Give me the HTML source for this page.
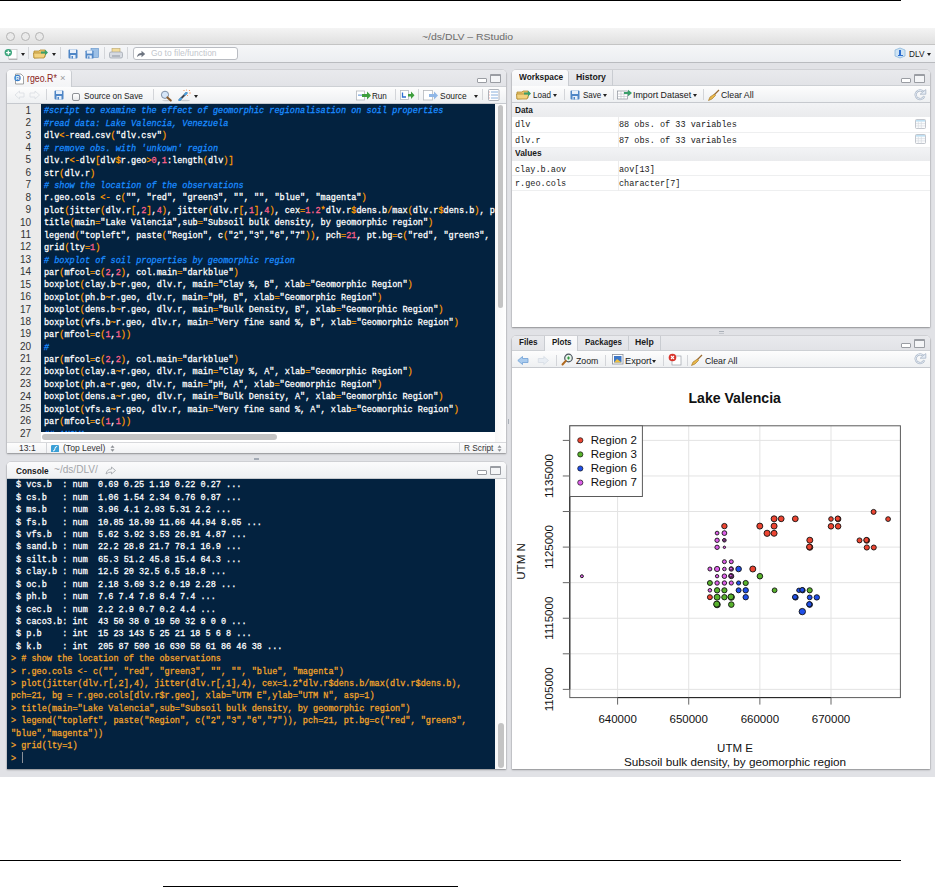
<!DOCTYPE html><html><head><meta charset="utf-8"><style>html,body{margin:0;padding:0;background:#fff;width:936px;height:887px;overflow:hidden;position:relative}i{font-style:italic}</style></head><body><div style="position:absolute;left:0px;top:0px;width:901px;height:1px;background:#000"></div>
<div style="position:absolute;left:0px;top:28px;width:935px;height:749px;background:#e1e2e6"></div>
<div style="position:absolute;left:0px;top:28px;width:935px;height:17px;background:linear-gradient(#f4f4f4,#e0e0e0);border-bottom:1px solid #c4c4c4;box-sizing:border-box"></div>
<div style="position:absolute;left:6.0px;top:31.7px;width:9px;height:9px;border-radius:50%;box-sizing:border-box;border:1px solid #b4b4b4;background:#eaeaea"></div>
<div style="position:absolute;left:20.5px;top:31.7px;width:9px;height:9px;border-radius:50%;box-sizing:border-box;border:1px solid #b4b4b4;background:#eaeaea"></div>
<div style="position:absolute;left:35.0px;top:31.7px;width:9px;height:9px;border-radius:50%;box-sizing:border-box;border:1px solid #b4b4b4;background:#eaeaea"></div>
<div style="position:absolute;left:422.4px;top:32.73px;white-space:pre;font-family:'Liberation Sans',sans-serif;font-size:9.3px;line-height:9.3px;color:#6a6a6a;transform:scaleX(1.1225);transform-origin:0 0;">~/ds/DLV – RStudio</div>
<div style="position:absolute;left:0px;top:45px;width:935px;height:18px;background:linear-gradient(#f5f6f8,#eceef1);border-bottom:1px solid #b9bbbf;box-sizing:border-box"></div>
<svg style="position:absolute;left:4px;top:48px" width="14" height="12"><rect x="4.5" y="1.5" width="8.5" height="9.5" fill="#fff" stroke="#c9c9c9" stroke-width="0.8"/><path d="M5 11.3 L13.3 11.3" stroke="#9a9a9a" stroke-width="0.8"/><circle cx="4.3" cy="4.6" r="3.7" fill="#3ba57c"/><path d="M4.3 2.4 L4.3 6.8 M2.1 4.6 L6.5 4.6" stroke="#fff" stroke-width="1.3"/></svg>
<div style="position:absolute;left:21px;top:52.5px;width:0;height:0;border-left:2.5px solid transparent;border-right:2.5px solid transparent;border-top:3px solid #222"></div>
<div style="position:absolute;left:27.5px;top:47px;width:1px;height:12px;background:#d3d5d9"></div>
<svg style="position:absolute;left:33px;top:48px" width="16" height="11"><path d="M1 3 L6 3 L7 2 L12 2 L12 9 L1 10 Z" fill="#e8c36a" stroke="#b08a30" stroke-width="0.8"/><path d="M0.5 5 L13 5 L11 10 L1 10 Z" fill="#f2d27e" stroke="#b08a30" stroke-width="0.8"/><path d="M8 3.5 L12 3.5 L12 1.5 L15 4.5 L12 7.5 L12 5.5 L8 5.5Z" fill="#3a9f6a"/></svg>
<div style="position:absolute;left:52px;top:52.5px;width:0;height:0;border-left:2.5px solid transparent;border-right:2.5px solid transparent;border-top:3px solid #222"></div>
<div style="position:absolute;left:59.5px;top:47px;width:1px;height:12px;background:#d3d5d9"></div>
<svg style="position:absolute;left:68px;top:49px" width="10" height="10" viewBox="0 0 10 10"><rect x="0.5" y="0.5" width="9" height="9" rx="1" fill="#4f86c6"/><rect x="2" y="0.5" width="6" height="3.5" fill="#e8f0fa"/><rect x="2.5" y="6" width="5" height="3.5" fill="#e8f0fa"/><rect x="3.5" y="7" width="1.5" height="2.5" fill="#4f86c6"/></svg>
<svg style="position:absolute;left:85px;top:48px" width="14" height="11"><rect x="6" y="0.5" width="7.5" height="9" fill="#9cc0e6" stroke="#5c8fc8" stroke-width="0.6"/></svg>
<svg style="position:absolute;left:85px;top:50px" width="9" height="9" viewBox="0 0 10 10"><rect x="0.5" y="0.5" width="9" height="9" rx="1" fill="#4f86c6"/><rect x="2" y="0.5" width="6" height="3.5" fill="#e8f0fa"/><rect x="2.5" y="6" width="5" height="3.5" fill="#e8f0fa"/><rect x="3.5" y="7" width="1.5" height="2.5" fill="#4f86c6"/></svg>
<div style="position:absolute;left:103.5px;top:47px;width:1px;height:12px;background:#d3d5d9"></div>
<svg style="position:absolute;left:109px;top:48px" width="14" height="11"><rect x="3" y="0.5" width="8" height="5" fill="#f3dc9b" stroke="#b9a46a" stroke-width="0.6"/><rect x="0.5" y="4" width="13" height="6" rx="1.5" fill="#d7dbe2" stroke="#9aa0aa" stroke-width="0.7"/><rect x="3" y="7.5" width="8" height="1" fill="#8c939e"/></svg>
<div style="position:absolute;left:127px;top:47px;width:1px;height:12px;background:#d3d5d9"></div>
<div style="position:absolute;left:132.5px;top:47px;width:105px;height:12.5px;background:#fff;border:1px solid #b9bcc2;border-radius:3px;box-sizing:border-box"></div>
<svg style="position:absolute;left:136px;top:50px" width="10" height="8"><path d="M1 7 Q1.5 3 5.5 3 L5.5 0.8 L9.2 4 L5.5 7.2 L5.5 5 Q3 5 1 7Z" fill="#6d7480"/></svg>
<div style="position:absolute;left:151px;top:48.88px;white-space:pre;font-family:'Liberation Sans',sans-serif;font-size:9px;line-height:9px;color:#c2c6cc;transform:scaleX(0.9352);transform-origin:0 0;">Go to file/function</div>
<svg style="position:absolute;left:894px;top:47px" width="12" height="12"><path d="M1 3 L6 1 L11 3 L11 9 L6 11 L1 9Z" fill="#cfe3f3" stroke="#8cb8dc" stroke-width="0.8"/><path d="M5 3 L7 3 L7 8 L9 8 L9 9 L4 9 L4 8 L5 8Z" fill="#2e6fd0"/></svg>
<div style="position:absolute;left:908.8px;top:48.94px;white-space:pre;font-family:'Liberation Sans',sans-serif;font-size:9.4px;line-height:9.4px;color:#1a1a1a;transform:scaleX(0.8756);transform-origin:0 0;">DLV</div>
<div style="position:absolute;left:927px;top:53px;width:0;height:0;border-left:2.5px solid transparent;border-right:2.5px solid transparent;border-top:3px solid #222"></div>
<div style="position:absolute;left:7px;top:70px;width:499px;height:383px;background:#fff;border-radius:4px 4px 0 0;box-shadow:0 1px 2px rgba(0,0,0,0.32), 0 0 0 0.5px rgba(0,0,0,0.12)"></div>
<div style="position:absolute;left:7px;top:70px;width:499px;height:17px;background:linear-gradient(#e9eaed,#e2e3e7);border-radius:4px 4px 0 0;border-bottom:1px solid #cdd0d4;box-sizing:border-box"></div>
<div style="position:absolute;left:7px;top:70px;width:64.5px;height:16.5px;background:linear-gradient(#fbfbfc,#f3f4f6);border-right:1px solid #c9ccd1;border-radius:4px 3px 0 0;box-sizing:border-box"></div>
<svg style="position:absolute;left:13px;top:73px" width="12" height="12"><path d="M2.5 1 L8 1 L10.5 3.5 L10.5 11 L2.5 11Z" fill="#fff" stroke="#8c8c8c" stroke-width="0.8"/><circle cx="4.5" cy="5" r="3.2" fill="#3c7fc8"/><text x="4.5" y="7" font-size="5" fill="#fff" text-anchor="middle" font-family="Liberation Sans" font-weight="bold">R</text></svg>
<div style="position:absolute;left:27.4px;top:73.73px;white-space:pre;font-family:'Liberation Sans',sans-serif;font-size:10px;line-height:10px;color:#8c1d1a;transform:scaleX(0.8789);transform-origin:0 0;">rgeo.R*</div>
<div style="position:absolute;left:59.5px;top:74.38px;white-space:pre;font-family:'Liberation Sans',sans-serif;font-size:9px;line-height:9px;color:#9a9a9a;transform:scaleX(1.0464);transform-origin:0 0;">×</div>
<div style="position:absolute;left:477px;top:78px;width:10px;height:4.5px;border:1px solid #9a9da3;border-top-width:1.5px;border-radius:1px;background:#fff;box-sizing:border-box"></div>
<div style="position:absolute;left:490px;top:74px;width:10.5px;height:8.5px;border:1px solid #9a9da3;border-top-width:2px;border-radius:1px;background:#f4f5f7;box-sizing:border-box"></div>
<div style="position:absolute;left:7px;top:87px;width:499px;height:16.5px;background:linear-gradient(#fdfdfd,#eef0f2);border-bottom:1px solid #c6c9ce;box-sizing:border-box"></div>
<svg style="position:absolute;left:14px;top:90px" width="28" height="10"><path d="M1 5 L5.5 1 L5.5 3 L10 3 L10 7 L5.5 7 L5.5 9Z" fill="none" stroke="#dde0e4" stroke-width="0.9"/><path d="M25.5 5 L21 1 L21 3 L16 3 L16 7 L21 7 L21 9Z" fill="none" stroke="#dde0e4" stroke-width="0.9"/></svg>
<div style="position:absolute;left:46px;top:89px;width:1px;height:11px;background:#d3d5d9"></div>
<svg style="position:absolute;left:53.5px;top:90px" width="10" height="10" viewBox="0 0 10 10"><rect x="0.5" y="0.5" width="9" height="9" rx="1" fill="#4f86c6"/><rect x="2" y="0.5" width="6" height="3.5" fill="#e8f0fa"/><rect x="2.5" y="6" width="5" height="3.5" fill="#e8f0fa"/><rect x="3.5" y="7" width="1.5" height="2.5" fill="#4f86c6"/></svg>
<div style="position:absolute;left:71.5px;top:92.5px;width:8px;height:8px;border:1px solid #8e9196;border-radius:2px;background:linear-gradient(#fff,#e9eaec);box-sizing:border-box"></div>
<div style="position:absolute;left:83.5px;top:90.87px;white-space:pre;font-family:'Liberation Sans',sans-serif;font-size:9.6px;line-height:9.6px;color:#1a1a1a;transform:scaleX(0.8637);transform-origin:0 0;">Source on Save</div>
<div style="position:absolute;left:152.5px;top:89px;width:1px;height:11px;background:#d3d5d9"></div>
<svg style="position:absolute;left:159.5px;top:89.5px" width="13" height="13"><ellipse cx="7" cy="10.6" rx="5" ry="0.7" fill="#c9ccd2"/><circle cx="5" cy="4.8" r="3.6" fill="#d6e6f8" stroke="#7d8fa6" stroke-width="1"/><path d="M7.4 7.4 L10.8 10.6" stroke="#8a5a2a" stroke-width="2" stroke-linecap="round"/></svg>
<svg style="position:absolute;left:178px;top:88.5px" width="14" height="13"><ellipse cx="7" cy="11.5" rx="5" ry="0.7" fill="#c9ccd2"/><path d="M1.5 11 L8.5 4" stroke="#3e4450" stroke-width="2" stroke-linecap="round"/><path d="M1.5 11 L3 9.5 M7 5.5 L8.5 4" stroke="#4aa0e0" stroke-width="2" stroke-linecap="round"/><circle cx="6" cy="1.5" r="0.6" fill="#f08a50"/><circle cx="11.5" cy="1.5" r="0.6" fill="#f08a50"/><circle cx="12" cy="4" r="0.7" fill="#f08a50"/><circle cx="9.5" cy="6.5" r="0.6" fill="#f08a50"/><circle cx="8.5" cy="1" r="0.5" fill="#f08a50"/></svg>
<div style="position:absolute;left:194px;top:95px;width:0;height:0;border-left:2.5px solid transparent;border-right:2.5px solid transparent;border-top:3px solid #222"></div>
<svg style="position:absolute;left:356px;top:90px" width="16" height="11"><rect x="0.5" y="1" width="8" height="9" fill="#fff" stroke="#b5b8bd" stroke-width="0.8"/><rect x="2" y="4.5" width="4.5" height="1.3" fill="#7aa6dc"/><path d="M6 4 L11 4 L11 1.5 L15 5.5 L11 9.5 L11 7 L6 7Z" fill="#3d9e3d"/></svg>
<div style="position:absolute;left:372.4px;top:91.04px;white-space:pre;font-family:'Liberation Sans',sans-serif;font-size:9.4px;line-height:9.4px;color:#1a1a1a;transform:scaleX(0.8640);transform-origin:0 0;">Run</div>
<div style="position:absolute;left:394.5px;top:89px;width:1px;height:11px;background:#d3d5d9"></div>
<svg style="position:absolute;left:400px;top:90px" width="15" height="11"><rect x="0.5" y="0.5" width="8" height="9" fill="#fff" stroke="#b5b8bd" stroke-width="0.8"/><path d="M2.5 2.5 L2.5 7 L6 7" fill="none" stroke="#2e6fd0" stroke-width="1.3"/><path d="M8 4 L11 4 L11 1.5 L14.5 5.2 L11 9 L11 6.5 L8 6.5Z" fill="#3d9e3d"/></svg>
<div style="position:absolute;left:418px;top:89px;width:1px;height:11px;background:#d3d5d9"></div>
<svg style="position:absolute;left:423px;top:90px" width="16" height="11"><rect x="0.5" y="0.5" width="9" height="9.5" fill="#fff" stroke="#b5b8bd" stroke-width="0.8"/><path d="M6 4 L11 4 L11 1.5 L15 5.5 L11 9.5 L11 7 L6 7Z" fill="#8fb6e6"/></svg>
<div style="position:absolute;left:439.6px;top:91.04px;white-space:pre;font-family:'Liberation Sans',sans-serif;font-size:9.4px;line-height:9.4px;color:#1a1a1a;transform:scaleX(0.8998);transform-origin:0 0;">Source</div>
<div style="position:absolute;left:473.5px;top:95px;width:0;height:0;border-left:2.5px solid transparent;border-right:2.5px solid transparent;border-top:3px solid #222"></div>
<div style="position:absolute;left:481.5px;top:89px;width:1px;height:11px;background:#d3d5d9"></div>
<svg style="position:absolute;left:488px;top:89px" width="12" height="12"><rect x="0.5" y="0.5" width="10.5" height="11" rx="1" fill="#fff" stroke="#9aa0a8" stroke-width="0.8"/><path d="M3 3 L10 3 M3 6 L10 6 M3 9 L10 9" stroke="#7da7d8" stroke-width="0.9"/><path d="M1.5 3 L2 3 M1.5 6 L2 6 M1.5 9 L2 9" stroke="#e05050" stroke-width="0.9"/></svg>
<div style="position:absolute;left:7px;top:103.5px;width:34px;height:339px;background:#ebebeb"></div>
<div style="position:absolute;left:41px;top:103.5px;width:454px;height:328px;background:#03223f"></div>
<div style="position:absolute;left:43.9px;top:105.4px;white-space:pre;font-family:'Liberation Mono',monospace;font-size:9.5px;line-height:12px;color:#fff;-webkit-text-stroke:0.28px currentColor;transform:scaleX(0.8982);transform-origin:0 0"><i style="color:#1a8cff">#script to examine the effect of geomorphic regionalisation on soil properties</i></div>
<div style="position:absolute;left:0px;top:104.7px;white-space:pre;font-family:'Liberation Sans',sans-serif;font-size:10px;line-height:12px;color:#333;width:31px;text-align:right">1</div>
<div style="position:absolute;left:43.9px;top:117.83000000000001px;white-space:pre;font-family:'Liberation Mono',monospace;font-size:9.5px;line-height:12px;color:#fff;-webkit-text-stroke:0.28px currentColor;transform:scaleX(0.8982);transform-origin:0 0"><i style="color:#1a8cff">#read data: Lake Valencia, Venezuela</i></div>
<div style="position:absolute;left:0px;top:117.13000000000001px;white-space:pre;font-family:'Liberation Sans',sans-serif;font-size:10px;line-height:12px;color:#333;width:31px;text-align:right">2</div>
<div style="position:absolute;left:43.9px;top:130.26px;white-space:pre;font-family:'Liberation Mono',monospace;font-size:9.5px;line-height:12px;color:#fff;-webkit-text-stroke:0.28px currentColor;transform:scaleX(0.8982);transform-origin:0 0">dlv<span style="color:#ff9d00">&lt;-</span>read.csv<span style="color:#ff9d00">(</span>&quot;dlv.csv&quot;<span style="color:#ff9d00">)</span></div>
<div style="position:absolute;left:0px;top:129.56px;white-space:pre;font-family:'Liberation Sans',sans-serif;font-size:10px;line-height:12px;color:#333;width:31px;text-align:right">3</div>
<div style="position:absolute;left:43.9px;top:142.69px;white-space:pre;font-family:'Liberation Mono',monospace;font-size:9.5px;line-height:12px;color:#fff;-webkit-text-stroke:0.28px currentColor;transform:scaleX(0.8982);transform-origin:0 0"><i style="color:#1a8cff"># remove obs. with &#x27;unkown&#x27; region</i></div>
<div style="position:absolute;left:0px;top:141.99px;white-space:pre;font-family:'Liberation Sans',sans-serif;font-size:10px;line-height:12px;color:#333;width:31px;text-align:right">4</div>
<div style="position:absolute;left:43.9px;top:155.12px;white-space:pre;font-family:'Liberation Mono',monospace;font-size:9.5px;line-height:12px;color:#fff;-webkit-text-stroke:0.28px currentColor;transform:scaleX(0.8982);transform-origin:0 0">dlv.r<span style="color:#ff9d00">&lt;-</span>dlv<span style="color:#ff9d00">[</span>dlv<span style="color:#ff9d00">$</span>r.geo<span style="color:#ff9d00">&gt;</span><span style="color:#ff628c">0</span>,<span style="color:#ff628c">1</span>:length<span style="color:#ff9d00">(</span>dlv<span style="color:#ff9d00">)]</span></div>
<div style="position:absolute;left:0px;top:154.42000000000002px;white-space:pre;font-family:'Liberation Sans',sans-serif;font-size:10px;line-height:12px;color:#333;width:31px;text-align:right">5</div>
<div style="position:absolute;left:43.9px;top:167.55px;white-space:pre;font-family:'Liberation Mono',monospace;font-size:9.5px;line-height:12px;color:#fff;-webkit-text-stroke:0.28px currentColor;transform:scaleX(0.8982);transform-origin:0 0">str<span style="color:#ff9d00">(</span>dlv.r<span style="color:#ff9d00">)</span></div>
<div style="position:absolute;left:0px;top:166.85000000000002px;white-space:pre;font-family:'Liberation Sans',sans-serif;font-size:10px;line-height:12px;color:#333;width:31px;text-align:right">6</div>
<div style="position:absolute;left:43.9px;top:179.98000000000002px;white-space:pre;font-family:'Liberation Mono',monospace;font-size:9.5px;line-height:12px;color:#fff;-webkit-text-stroke:0.28px currentColor;transform:scaleX(0.8982);transform-origin:0 0"><i style="color:#1a8cff"># show the location of the observations</i></div>
<div style="position:absolute;left:0px;top:179.28000000000003px;white-space:pre;font-family:'Liberation Sans',sans-serif;font-size:10px;line-height:12px;color:#333;width:31px;text-align:right">7</div>
<div style="position:absolute;left:43.9px;top:192.41px;white-space:pre;font-family:'Liberation Mono',monospace;font-size:9.5px;line-height:12px;color:#fff;-webkit-text-stroke:0.28px currentColor;transform:scaleX(0.8982);transform-origin:0 0">r.geo.cols <span style="color:#ff9d00">&lt;-</span> c<span style="color:#ff9d00">(</span>&quot;&quot;, &quot;red&quot;, &quot;green3&quot;, &quot;&quot;, &quot;&quot;, &quot;blue&quot;, &quot;magenta&quot;<span style="color:#ff9d00">)</span></div>
<div style="position:absolute;left:0px;top:191.71px;white-space:pre;font-family:'Liberation Sans',sans-serif;font-size:10px;line-height:12px;color:#333;width:31px;text-align:right">8</div>
<div style="position:absolute;left:43.9px;top:204.84px;white-space:pre;font-family:'Liberation Mono',monospace;font-size:9.5px;line-height:12px;color:#fff;-webkit-text-stroke:0.28px currentColor;transform:scaleX(0.8982);transform-origin:0 0">plot<span style="color:#ff9d00">(</span>jitter<span style="color:#ff9d00">(</span>dlv.r<span style="color:#ff9d00">[</span>,<span style="color:#ff628c">2</span><span style="color:#ff9d00">]</span>,<span style="color:#ff628c">4</span><span style="color:#ff9d00">)</span>, jitter<span style="color:#ff9d00">(</span>dlv.r<span style="color:#ff9d00">[</span>,<span style="color:#ff628c">1</span><span style="color:#ff9d00">]</span>,<span style="color:#ff628c">4</span><span style="color:#ff9d00">)</span>, cex<span style="color:#ff9d00">=</span><span style="color:#ff628c">1.2</span><span style="color:#ff9d00">*</span>dlv.r<span style="color:#ff9d00">$</span>dens.b<span style="color:#ff9d00">/</span>max<span style="color:#ff9d00">(</span>dlv.r<span style="color:#ff9d00">$</span>dens.b<span style="color:#ff9d00">)</span>, p</div>
<div style="position:absolute;left:0px;top:204.14000000000001px;white-space:pre;font-family:'Liberation Sans',sans-serif;font-size:10px;line-height:12px;color:#333;width:31px;text-align:right">9</div>
<div style="position:absolute;left:43.9px;top:217.27px;white-space:pre;font-family:'Liberation Mono',monospace;font-size:9.5px;line-height:12px;color:#fff;-webkit-text-stroke:0.28px currentColor;transform:scaleX(0.8982);transform-origin:0 0">title<span style="color:#ff9d00">(</span>main<span style="color:#ff9d00">=</span>&quot;Lake Valencia&quot;,sub<span style="color:#ff9d00">=</span>&quot;Subsoil bulk density, by geomorphic region&quot;<span style="color:#ff9d00">)</span></div>
<div style="position:absolute;left:0px;top:216.57000000000002px;white-space:pre;font-family:'Liberation Sans',sans-serif;font-size:10px;line-height:12px;color:#333;width:31px;text-align:right">10</div>
<div style="position:absolute;left:43.9px;top:229.7px;white-space:pre;font-family:'Liberation Mono',monospace;font-size:9.5px;line-height:12px;color:#fff;-webkit-text-stroke:0.28px currentColor;transform:scaleX(0.8982);transform-origin:0 0">legend<span style="color:#ff9d00">(</span>&quot;topleft&quot;, paste<span style="color:#ff9d00">(</span>&quot;Region&quot;, c<span style="color:#ff9d00">(</span>&quot;2&quot;,&quot;3&quot;,&quot;6&quot;,&quot;7&quot;<span style="color:#ff9d00">))</span>, pch<span style="color:#ff9d00">=</span><span style="color:#ff628c">21</span>, pt.bg<span style="color:#ff9d00">=</span>c<span style="color:#ff9d00">(</span>&quot;red&quot;, &quot;green3&quot;,</div>
<div style="position:absolute;left:0px;top:229.0px;white-space:pre;font-family:'Liberation Sans',sans-serif;font-size:10px;line-height:12px;color:#333;width:31px;text-align:right">11</div>
<div style="position:absolute;left:43.9px;top:242.13px;white-space:pre;font-family:'Liberation Mono',monospace;font-size:9.5px;line-height:12px;color:#fff;-webkit-text-stroke:0.28px currentColor;transform:scaleX(0.8982);transform-origin:0 0">grid<span style="color:#ff9d00">(</span>lty<span style="color:#ff9d00">=</span><span style="color:#ff628c">1</span><span style="color:#ff9d00">)</span></div>
<div style="position:absolute;left:0px;top:241.43px;white-space:pre;font-family:'Liberation Sans',sans-serif;font-size:10px;line-height:12px;color:#333;width:31px;text-align:right">12</div>
<div style="position:absolute;left:43.9px;top:254.56px;white-space:pre;font-family:'Liberation Mono',monospace;font-size:9.5px;line-height:12px;color:#fff;-webkit-text-stroke:0.28px currentColor;transform:scaleX(0.8982);transform-origin:0 0"><i style="color:#1a8cff"># boxplot of soil properties by geomorphic region</i></div>
<div style="position:absolute;left:0px;top:253.86px;white-space:pre;font-family:'Liberation Sans',sans-serif;font-size:10px;line-height:12px;color:#333;width:31px;text-align:right">13</div>
<div style="position:absolute;left:43.9px;top:266.99px;white-space:pre;font-family:'Liberation Mono',monospace;font-size:9.5px;line-height:12px;color:#fff;-webkit-text-stroke:0.28px currentColor;transform:scaleX(0.8982);transform-origin:0 0">par<span style="color:#ff9d00">(</span>mfcol<span style="color:#ff9d00">=</span>c<span style="color:#ff9d00">(</span><span style="color:#ff628c">2</span>,<span style="color:#ff628c">2</span><span style="color:#ff9d00">)</span>, col.main<span style="color:#ff9d00">=</span>&quot;darkblue&quot;<span style="color:#ff9d00">)</span></div>
<div style="position:absolute;left:0px;top:266.29px;white-space:pre;font-family:'Liberation Sans',sans-serif;font-size:10px;line-height:12px;color:#333;width:31px;text-align:right">14</div>
<div style="position:absolute;left:43.9px;top:279.41999999999996px;white-space:pre;font-family:'Liberation Mono',monospace;font-size:9.5px;line-height:12px;color:#fff;-webkit-text-stroke:0.28px currentColor;transform:scaleX(0.8982);transform-origin:0 0">boxplot<span style="color:#ff9d00">(</span>clay.b<span style="color:#ff9d00">~</span>r.geo, dlv.r, main<span style="color:#ff9d00">=</span>&quot;Clay %, B&quot;, xlab<span style="color:#ff9d00">=</span>&quot;Geomorphic Region&quot;<span style="color:#ff9d00">)</span></div>
<div style="position:absolute;left:0px;top:278.71999999999997px;white-space:pre;font-family:'Liberation Sans',sans-serif;font-size:10px;line-height:12px;color:#333;width:31px;text-align:right">15</div>
<div style="position:absolute;left:43.9px;top:291.85px;white-space:pre;font-family:'Liberation Mono',monospace;font-size:9.5px;line-height:12px;color:#fff;-webkit-text-stroke:0.28px currentColor;transform:scaleX(0.8982);transform-origin:0 0">boxplot<span style="color:#ff9d00">(</span>ph.b<span style="color:#ff9d00">~</span>r.geo, dlv.r, main<span style="color:#ff9d00">=</span>&quot;pH, B&quot;, xlab<span style="color:#ff9d00">=</span>&quot;Geomorphic Region&quot;<span style="color:#ff9d00">)</span></div>
<div style="position:absolute;left:0px;top:291.15000000000003px;white-space:pre;font-family:'Liberation Sans',sans-serif;font-size:10px;line-height:12px;color:#333;width:31px;text-align:right">16</div>
<div style="position:absolute;left:43.9px;top:304.28px;white-space:pre;font-family:'Liberation Mono',monospace;font-size:9.5px;line-height:12px;color:#fff;-webkit-text-stroke:0.28px currentColor;transform:scaleX(0.8982);transform-origin:0 0">boxplot<span style="color:#ff9d00">(</span>dens.b<span style="color:#ff9d00">~</span>r.geo, dlv.r, main<span style="color:#ff9d00">=</span>&quot;Bulk Density, B&quot;, xlab<span style="color:#ff9d00">=</span>&quot;Geomorphic Region&quot;<span style="color:#ff9d00">)</span></div>
<div style="position:absolute;left:0px;top:303.58px;white-space:pre;font-family:'Liberation Sans',sans-serif;font-size:10px;line-height:12px;color:#333;width:31px;text-align:right">17</div>
<div style="position:absolute;left:43.9px;top:316.71000000000004px;white-space:pre;font-family:'Liberation Mono',monospace;font-size:9.5px;line-height:12px;color:#fff;-webkit-text-stroke:0.28px currentColor;transform:scaleX(0.8982);transform-origin:0 0">boxplot<span style="color:#ff9d00">(</span>vfs.b<span style="color:#ff9d00">~</span>r.geo, dlv.r, main<span style="color:#ff9d00">=</span>&quot;Very fine sand %, B&quot;, xlab<span style="color:#ff9d00">=</span>&quot;Geomorphic Region&quot;<span style="color:#ff9d00">)</span></div>
<div style="position:absolute;left:0px;top:316.01000000000005px;white-space:pre;font-family:'Liberation Sans',sans-serif;font-size:10px;line-height:12px;color:#333;width:31px;text-align:right">18</div>
<div style="position:absolute;left:43.9px;top:329.14px;white-space:pre;font-family:'Liberation Mono',monospace;font-size:9.5px;line-height:12px;color:#fff;-webkit-text-stroke:0.28px currentColor;transform:scaleX(0.8982);transform-origin:0 0">par<span style="color:#ff9d00">(</span>mfcol<span style="color:#ff9d00">=</span>c<span style="color:#ff9d00">(</span><span style="color:#ff628c">1</span>,<span style="color:#ff628c">1</span><span style="color:#ff9d00">))</span></div>
<div style="position:absolute;left:0px;top:328.44px;white-space:pre;font-family:'Liberation Sans',sans-serif;font-size:10px;line-height:12px;color:#333;width:31px;text-align:right">19</div>
<div style="position:absolute;left:43.9px;top:341.57px;white-space:pre;font-family:'Liberation Mono',monospace;font-size:9.5px;line-height:12px;color:#fff;-webkit-text-stroke:0.28px currentColor;transform:scaleX(0.8982);transform-origin:0 0"><i style="color:#1a8cff">#</i></div>
<div style="position:absolute;left:0px;top:340.87px;white-space:pre;font-family:'Liberation Sans',sans-serif;font-size:10px;line-height:12px;color:#333;width:31px;text-align:right">20</div>
<div style="position:absolute;left:43.9px;top:354.0px;white-space:pre;font-family:'Liberation Mono',monospace;font-size:9.5px;line-height:12px;color:#fff;-webkit-text-stroke:0.28px currentColor;transform:scaleX(0.8982);transform-origin:0 0">par<span style="color:#ff9d00">(</span>mfcol<span style="color:#ff9d00">=</span>c<span style="color:#ff9d00">(</span><span style="color:#ff628c">2</span>,<span style="color:#ff628c">2</span><span style="color:#ff9d00">)</span>, col.main<span style="color:#ff9d00">=</span>&quot;darkblue&quot;<span style="color:#ff9d00">)</span></div>
<div style="position:absolute;left:0px;top:353.3px;white-space:pre;font-family:'Liberation Sans',sans-serif;font-size:10px;line-height:12px;color:#333;width:31px;text-align:right">21</div>
<div style="position:absolute;left:43.9px;top:366.42999999999995px;white-space:pre;font-family:'Liberation Mono',monospace;font-size:9.5px;line-height:12px;color:#fff;-webkit-text-stroke:0.28px currentColor;transform:scaleX(0.8982);transform-origin:0 0">boxplot<span style="color:#ff9d00">(</span>clay.a<span style="color:#ff9d00">~</span>r.geo, dlv.r, main<span style="color:#ff9d00">=</span>&quot;Clay %, A&quot;, xlab<span style="color:#ff9d00">=</span>&quot;Geomorphic Region&quot;<span style="color:#ff9d00">)</span></div>
<div style="position:absolute;left:0px;top:365.72999999999996px;white-space:pre;font-family:'Liberation Sans',sans-serif;font-size:10px;line-height:12px;color:#333;width:31px;text-align:right">22</div>
<div style="position:absolute;left:43.9px;top:378.86px;white-space:pre;font-family:'Liberation Mono',monospace;font-size:9.5px;line-height:12px;color:#fff;-webkit-text-stroke:0.28px currentColor;transform:scaleX(0.8982);transform-origin:0 0">boxplot<span style="color:#ff9d00">(</span>ph.a<span style="color:#ff9d00">~</span>r.geo, dlv.r, main<span style="color:#ff9d00">=</span>&quot;pH, A&quot;, xlab<span style="color:#ff9d00">=</span>&quot;Geomorphic Region&quot;<span style="color:#ff9d00">)</span></div>
<div style="position:absolute;left:0px;top:378.16px;white-space:pre;font-family:'Liberation Sans',sans-serif;font-size:10px;line-height:12px;color:#333;width:31px;text-align:right">23</div>
<div style="position:absolute;left:43.9px;top:391.28999999999996px;white-space:pre;font-family:'Liberation Mono',monospace;font-size:9.5px;line-height:12px;color:#fff;-webkit-text-stroke:0.28px currentColor;transform:scaleX(0.8982);transform-origin:0 0">boxplot<span style="color:#ff9d00">(</span>dens.a<span style="color:#ff9d00">~</span>r.geo, dlv.r, main<span style="color:#ff9d00">=</span>&quot;Bulk Density, A&quot;, xlab<span style="color:#ff9d00">=</span>&quot;Geomorphic Region&quot;<span style="color:#ff9d00">)</span></div>
<div style="position:absolute;left:0px;top:390.59px;white-space:pre;font-family:'Liberation Sans',sans-serif;font-size:10px;line-height:12px;color:#333;width:31px;text-align:right">24</div>
<div style="position:absolute;left:43.9px;top:403.72px;white-space:pre;font-family:'Liberation Mono',monospace;font-size:9.5px;line-height:12px;color:#fff;-webkit-text-stroke:0.28px currentColor;transform:scaleX(0.8982);transform-origin:0 0">boxplot<span style="color:#ff9d00">(</span>vfs.a<span style="color:#ff9d00">~</span>r.geo, dlv.r, main<span style="color:#ff9d00">=</span>&quot;Very fine sand %, A&quot;, xlab<span style="color:#ff9d00">=</span>&quot;Geomorphic Region&quot;<span style="color:#ff9d00">)</span></div>
<div style="position:absolute;left:0px;top:403.02000000000004px;white-space:pre;font-family:'Liberation Sans',sans-serif;font-size:10px;line-height:12px;color:#333;width:31px;text-align:right">25</div>
<div style="position:absolute;left:43.9px;top:416.15px;white-space:pre;font-family:'Liberation Mono',monospace;font-size:9.5px;line-height:12px;color:#fff;-webkit-text-stroke:0.28px currentColor;transform:scaleX(0.8982);transform-origin:0 0">par<span style="color:#ff9d00">(</span>mfcol<span style="color:#ff9d00">=</span>c<span style="color:#ff9d00">(</span><span style="color:#ff628c">1</span>,<span style="color:#ff628c">1</span><span style="color:#ff9d00">))</span></div>
<div style="position:absolute;left:0px;top:415.45px;white-space:pre;font-family:'Liberation Sans',sans-serif;font-size:10px;line-height:12px;color:#333;width:31px;text-align:right">26</div>
<div style="position:absolute;left:43.9px;top:428.58000000000004px;white-space:pre;font-family:'Liberation Mono',monospace;font-size:9.5px;line-height:12px;color:#fff;-webkit-text-stroke:0.28px currentColor;transform:scaleX(0.8982);transform-origin:0 0"><i style="color:#1a8cff">## ANOVA</i></div>
<div style="position:absolute;left:0px;top:427.88000000000005px;white-space:pre;font-family:'Liberation Sans',sans-serif;font-size:10px;line-height:12px;color:#333;width:31px;text-align:right">27</div>
<div style="position:absolute;left:41px;top:431.5px;width:454px;height:11px;background:#fff"></div>
<div style="position:absolute;left:7px;top:442px;width:34px;height:1px;background:#ebebeb"></div>
<div style="position:absolute;left:41.5px;top:434px;width:235.7px;height:5.7px;background:#c4c4c4;border-radius:3px"></div>
<div style="position:absolute;left:495px;top:103.5px;width:11px;height:339px;background:linear-gradient(90deg,#f6f6f6,#fff)"></div>
<div style="position:absolute;left:497.5px;top:105px;width:5.5px;height:203px;background:#c4c4c4;border-radius:3px"></div>
<div style="position:absolute;left:7px;top:442px;width:499px;height:11px;background:linear-gradient(#fdfdfd,#f1f2f4);border-top:1px solid #d8d9dc;box-sizing:border-box"></div>
<div style="position:absolute;left:46px;top:443px;width:1px;height:9.5px;background:#d3d5d9"></div>
<div style="position:absolute;left:18.75px;top:444.21px;white-space:pre;font-family:'Liberation Sans',sans-serif;font-size:9.2px;line-height:9.2px;color:#333;transform:scaleX(0.9327);transform-origin:0 0;">13:1</div>
<svg style="position:absolute;left:51px;top:444.5px" width="8" height="7.5"><rect x="0" y="0" width="8" height="7.5" rx="1.2" fill="#3a9fd6"/><path d="M2 6 Q4 6 4 3.5 Q4 1.5 6.2 1.5" fill="none" stroke="#fff" stroke-width="1"/></svg>
<div style="position:absolute;left:62.5px;top:444.21px;white-space:pre;font-family:'Liberation Sans',sans-serif;font-size:9.2px;line-height:9.2px;color:#333;transform:scaleX(0.9317);transform-origin:0 0;">(Top Level)</div>
<svg style="position:absolute;left:109.7px;top:445px" width="5" height="7"><path d="M0.5 2.8 L2.5 0.3 L4.5 2.8Z M0.5 4.2 L2.5 6.7 L4.5 4.2Z" fill="#8a8d92"/></svg>
<div style="position:absolute;left:458.5px;top:443px;width:1px;height:9px;background:#d3d5d9"></div>
<div style="position:absolute;left:463.6px;top:444.01px;white-space:pre;font-family:'Liberation Sans',sans-serif;font-size:9.2px;line-height:9.2px;color:#333;transform:scaleX(0.8986);transform-origin:0 0;">R Script</div>
<svg style="position:absolute;left:497px;top:445px" width="5" height="7"><path d="M0.5 2.8 L2.5 0.3 L4.5 2.8Z M0.5 4.2 L2.5 6.7 L4.5 4.2Z" fill="#8a8d92"/></svg>
<div style="position:absolute;left:7px;top:462px;width:499px;height:307px;background:#fff;border-radius:4px 4px 0 0;box-shadow:0 1px 2px rgba(0,0,0,0.32), 0 0 0 0.5px rgba(0,0,0,0.12)"></div>
<div style="position:absolute;left:7px;top:462px;width:499px;height:17px;background:linear-gradient(#fbfbfc,#eef0f2);border-radius:4px 4px 0 0;border-bottom:1px solid #c6c9ce;box-sizing:border-box"></div>
<div style="position:absolute;left:16px;top:465.50px;white-space:pre;font-family:'Liberation Sans',sans-serif;font-size:9.8px;line-height:9.8px;font-weight:bold;color:#1a1a1a;transform:scaleX(0.8433);transform-origin:0 0;">Console</div>
<div style="position:absolute;left:54.2px;top:465.34px;white-space:pre;font-family:'Liberation Sans',sans-serif;font-size:10px;line-height:10px;color:#a2a4a8;transform:scaleX(1.0081);transform-origin:0 0;">~/ds/DLV/</div>
<svg style="position:absolute;left:105px;top:466px" width="12" height="10"><path d="M1 8 Q2 3 6.5 3 L6.5 1 L10.5 4.5 L6.5 8 L6.5 6 Q3.5 6 1 8Z" fill="none" stroke="#a8abb0" stroke-width="0.9"/></svg>
<div style="position:absolute;left:477px;top:470px;width:10px;height:4.5px;border:1px solid #9a9da3;border-top-width:1.5px;border-radius:1px;background:#fff;box-sizing:border-box"></div>
<div style="position:absolute;left:490px;top:466px;width:10.5px;height:8.5px;border:1px solid #9a9da3;border-top-width:2px;border-radius:1px;background:#f4f5f7;box-sizing:border-box"></div>
<div style="position:absolute;left:7px;top:479px;width:488px;height:290px;background:#03223f"></div>
<div style="position:absolute;left:495px;top:479px;width:11px;height:290px;background:linear-gradient(90deg,#f6f6f6,#fff)"></div>
<div style="position:absolute;left:497.5px;top:723px;width:6px;height:45px;background:#c4c4c4;border-radius:3px"></div>
<div style="position:absolute;left:11.2px;top:479.3px;white-space:pre;font-family:'Liberation Mono',monospace;font-size:9.5px;line-height:12px;color:#fff;-webkit-text-stroke:0.28px currentColor;color:#ffffff;transform:scaleX(0.8982);transform-origin:0 0"> $ vcs.b  : num  0.69 0.25 1.19 0.22 0.27 ...</div>
<div style="position:absolute;left:11.2px;top:491.72px;white-space:pre;font-family:'Liberation Mono',monospace;font-size:9.5px;line-height:12px;color:#fff;-webkit-text-stroke:0.28px currentColor;color:#ffffff;transform:scaleX(0.8982);transform-origin:0 0"> $ cs.b   : num  1.06 1.54 2.34 0.76 0.87 ...</div>
<div style="position:absolute;left:11.2px;top:504.14px;white-space:pre;font-family:'Liberation Mono',monospace;font-size:9.5px;line-height:12px;color:#fff;-webkit-text-stroke:0.28px currentColor;color:#ffffff;transform:scaleX(0.8982);transform-origin:0 0"> $ ms.b   : num  3.96 4.1 2.93 5.31 2.2 ...</div>
<div style="position:absolute;left:11.2px;top:516.5600000000001px;white-space:pre;font-family:'Liberation Mono',monospace;font-size:9.5px;line-height:12px;color:#fff;-webkit-text-stroke:0.28px currentColor;color:#ffffff;transform:scaleX(0.8982);transform-origin:0 0"> $ fs.b   : num  10.85 18.99 11.66 44.94 8.65 ...</div>
<div style="position:absolute;left:11.2px;top:528.98px;white-space:pre;font-family:'Liberation Mono',monospace;font-size:9.5px;line-height:12px;color:#fff;-webkit-text-stroke:0.28px currentColor;color:#ffffff;transform:scaleX(0.8982);transform-origin:0 0"> $ vfs.b  : num  5.62 3.92 3.53 26.91 4.87 ...</div>
<div style="position:absolute;left:11.2px;top:541.4px;white-space:pre;font-family:'Liberation Mono',monospace;font-size:9.5px;line-height:12px;color:#fff;-webkit-text-stroke:0.28px currentColor;color:#ffffff;transform:scaleX(0.8982);transform-origin:0 0"> $ sand.b : num  22.2 28.8 21.7 78.1 16.9 ...</div>
<div style="position:absolute;left:11.2px;top:553.82px;white-space:pre;font-family:'Liberation Mono',monospace;font-size:9.5px;line-height:12px;color:#fff;-webkit-text-stroke:0.28px currentColor;color:#ffffff;transform:scaleX(0.8982);transform-origin:0 0"> $ silt.b : num  65.3 51.2 45.8 15.4 64.3 ...</div>
<div style="position:absolute;left:11.2px;top:566.24px;white-space:pre;font-family:'Liberation Mono',monospace;font-size:9.5px;line-height:12px;color:#fff;-webkit-text-stroke:0.28px currentColor;color:#ffffff;transform:scaleX(0.8982);transform-origin:0 0"> $ clay.b : num  12.5 20 32.5 6.5 18.8 ...</div>
<div style="position:absolute;left:11.2px;top:578.66px;white-space:pre;font-family:'Liberation Mono',monospace;font-size:9.5px;line-height:12px;color:#fff;-webkit-text-stroke:0.28px currentColor;color:#ffffff;transform:scaleX(0.8982);transform-origin:0 0"> $ oc.b   : num  2.18 3.69 3.2 0.19 2.28 ...</div>
<div style="position:absolute;left:11.2px;top:591.08px;white-space:pre;font-family:'Liberation Mono',monospace;font-size:9.5px;line-height:12px;color:#fff;-webkit-text-stroke:0.28px currentColor;color:#ffffff;transform:scaleX(0.8982);transform-origin:0 0"> $ ph.b   : num  7.6 7.4 7.8 8.4 7.4 ...</div>
<div style="position:absolute;left:11.2px;top:603.5px;white-space:pre;font-family:'Liberation Mono',monospace;font-size:9.5px;line-height:12px;color:#fff;-webkit-text-stroke:0.28px currentColor;color:#ffffff;transform:scaleX(0.8982);transform-origin:0 0"> $ cec.b  : num  2.2 2.9 0.7 0.2 4.4 ...</div>
<div style="position:absolute;left:11.2px;top:615.9200000000001px;white-space:pre;font-family:'Liberation Mono',monospace;font-size:9.5px;line-height:12px;color:#fff;-webkit-text-stroke:0.28px currentColor;color:#ffffff;transform:scaleX(0.8982);transform-origin:0 0"> $ caco3.b: int  43 50 38 0 19 50 32 8 0 0 ...</div>
<div style="position:absolute;left:11.2px;top:628.34px;white-space:pre;font-family:'Liberation Mono',monospace;font-size:9.5px;line-height:12px;color:#fff;-webkit-text-stroke:0.28px currentColor;color:#ffffff;transform:scaleX(0.8982);transform-origin:0 0"> $ p.b    : int  15 23 143 5 25 21 18 5 6 8 ...</div>
<div style="position:absolute;left:11.2px;top:640.76px;white-space:pre;font-family:'Liberation Mono',monospace;font-size:9.5px;line-height:12px;color:#fff;-webkit-text-stroke:0.28px currentColor;color:#ffffff;transform:scaleX(0.8982);transform-origin:0 0"> $ k.b    : int  205 87 500 16 630 58 61 86 46 38 ...</div>
<div style="position:absolute;left:11.2px;top:653.1800000000001px;white-space:pre;font-family:'Liberation Mono',monospace;font-size:9.5px;line-height:12px;color:#fff;-webkit-text-stroke:0.28px currentColor;color:#f4a52a;transform:scaleX(0.8982);transform-origin:0 0">&gt; # show the location of the observations</div>
<div style="position:absolute;left:11.2px;top:665.6px;white-space:pre;font-family:'Liberation Mono',monospace;font-size:9.5px;line-height:12px;color:#fff;-webkit-text-stroke:0.28px currentColor;color:#f4a52a;transform:scaleX(0.8982);transform-origin:0 0">&gt; r.geo.cols &lt;- c(&quot;&quot;, &quot;red&quot;, &quot;green3&quot;, &quot;&quot;, &quot;&quot;, &quot;blue&quot;, &quot;magenta&quot;)</div>
<div style="position:absolute;left:11.2px;top:678.02px;white-space:pre;font-family:'Liberation Mono',monospace;font-size:9.5px;line-height:12px;color:#fff;-webkit-text-stroke:0.28px currentColor;color:#f4a52a;transform:scaleX(0.8982);transform-origin:0 0">&gt; plot(jitter(dlv.r[,2],4), jitter(dlv.r[,1],4), cex=1.2*dlv.r$dens.b/max(dlv.r$dens.b),</div>
<div style="position:absolute;left:11.2px;top:690.44px;white-space:pre;font-family:'Liberation Mono',monospace;font-size:9.5px;line-height:12px;color:#fff;-webkit-text-stroke:0.28px currentColor;color:#f4a52a;transform:scaleX(0.8982);transform-origin:0 0">pch=21, bg = r.geo.cols[dlv.r$r.geo], xlab=&quot;UTM E&quot;,ylab=&quot;UTM N&quot;, asp=1)</div>
<div style="position:absolute;left:11.2px;top:702.86px;white-space:pre;font-family:'Liberation Mono',monospace;font-size:9.5px;line-height:12px;color:#fff;-webkit-text-stroke:0.28px currentColor;color:#f4a52a;transform:scaleX(0.8982);transform-origin:0 0">&gt; title(main=&quot;Lake Valencia&quot;,sub=&quot;Subsoil bulk density, by geomorphic region&quot;)</div>
<div style="position:absolute;left:11.2px;top:715.28px;white-space:pre;font-family:'Liberation Mono',monospace;font-size:9.5px;line-height:12px;color:#fff;-webkit-text-stroke:0.28px currentColor;color:#f4a52a;transform:scaleX(0.8982);transform-origin:0 0">&gt; legend(&quot;topleft&quot;, paste(&quot;Region&quot;, c(&quot;2&quot;,&quot;3&quot;,&quot;6&quot;,&quot;7&quot;)), pch=21, pt.bg=c(&quot;red&quot;, &quot;green3&quot;,</div>
<div style="position:absolute;left:11.2px;top:727.7px;white-space:pre;font-family:'Liberation Mono',monospace;font-size:9.5px;line-height:12px;color:#fff;-webkit-text-stroke:0.28px currentColor;color:#f4a52a;transform:scaleX(0.8982);transform-origin:0 0">&quot;blue&quot;,&quot;magenta&quot;))</div>
<div style="position:absolute;left:11.2px;top:740.12px;white-space:pre;font-family:'Liberation Mono',monospace;font-size:9.5px;line-height:12px;color:#fff;-webkit-text-stroke:0.28px currentColor;color:#f4a52a;transform:scaleX(0.8982);transform-origin:0 0">&gt; grid(lty=1)</div>
<div style="position:absolute;left:11.2px;top:752.54px;white-space:pre;font-family:'Liberation Mono',monospace;font-size:9.5px;line-height:12px;color:#fff;-webkit-text-stroke:0.28px currentColor;color:#f4a52a;transform:scaleX(0.8982);transform-origin:0 0">&gt; </div>
<div style="position:absolute;left:22px;top:752px;width:1px;height:11px;background:#8a9099"></div>
<div style="position:absolute;left:512px;top:70px;width:418px;height:257px;background:#fff;border-radius:4px 4px 0 0;box-shadow:0 1px 2px rgba(0,0,0,0.32), 0 0 0 0.5px rgba(0,0,0,0.12)"></div>
<div style="position:absolute;left:512px;top:70px;width:418px;height:16px;background:linear-gradient(#e9eaed,#e2e3e7);border-radius:4px 4px 0 0;border-bottom:1px solid #cdd0d4;box-sizing:border-box"></div>
<div style="position:absolute;left:512px;top:70px;width:56.5px;height:16px;background:linear-gradient(#fbfbfc,#f3f4f6);border-right:1px solid #c9ccd1;border-radius:4px 3px 0 0;box-sizing:border-box"></div>
<div style="position:absolute;left:568.5px;top:70px;width:44px;height:15.5px;border-right:1px solid #c9ccd1;box-sizing:border-box"></div>
<div style="position:absolute;left:518.9px;top:72.51px;white-space:pre;font-family:'Liberation Sans',sans-serif;font-size:9.2px;line-height:9.2px;font-weight:bold;color:#1a1a1a;transform:scaleX(0.9035);transform-origin:0 0;">Workspace</div>
<div style="position:absolute;left:575.9px;top:72.51px;white-space:pre;font-family:'Liberation Sans',sans-serif;font-size:9.2px;line-height:9.2px;font-weight:bold;color:#1a1a1a;transform:scaleX(0.9465);transform-origin:0 0;">History</div>
<div style="position:absolute;left:901px;top:78px;width:10px;height:4.5px;border:1px solid #9a9da3;border-top-width:1.5px;border-radius:1px;background:#fff;box-sizing:border-box"></div>
<div style="position:absolute;left:914px;top:74px;width:10.5px;height:8.5px;border:1px solid #9a9da3;border-top-width:2px;border-radius:1px;background:#f4f5f7;box-sizing:border-box"></div>
<div style="position:absolute;left:512px;top:86px;width:418px;height:16.5px;background:linear-gradient(#fdfdfd,#eef0f2);border-bottom:1px solid #c6c9ce;box-sizing:border-box"></div>
<svg style="position:absolute;left:516px;top:89px" width="16" height="11"><path d="M1 3 L6 3 L7 2 L12 2 L12 9 L1 10 Z" fill="#e8c36a" stroke="#b08a30" stroke-width="0.8"/><path d="M0.5 5 L13 5 L11 10 L1 10 Z" fill="#f2d27e" stroke="#b08a30" stroke-width="0.8"/><path d="M8 3.5 L12 3.5 L12 1.5 L15 4.5 L12 7.5 L12 5.5 L8 5.5Z" fill="#3a9f6a"/></svg>
<div style="position:absolute;left:532.7px;top:89.87px;white-space:pre;font-family:'Liberation Sans',sans-serif;font-size:9.6px;line-height:9.6px;color:#1a1a1a;transform:scaleX(0.8382);transform-origin:0 0;">Load</div>
<div style="position:absolute;left:552.5px;top:94px;width:0;height:0;border-left:2.5px solid transparent;border-right:2.5px solid transparent;border-top:3px solid #222"></div>
<div style="position:absolute;left:563.5px;top:89px;width:1px;height:11px;background:#d3d5d9"></div>
<svg style="position:absolute;left:569.5px;top:89.5px" width="10" height="10" viewBox="0 0 10 10"><rect x="0.5" y="0.5" width="9" height="9" rx="1" fill="#4f86c6"/><rect x="2" y="0.5" width="6" height="3.5" fill="#e8f0fa"/><rect x="2.5" y="6" width="5" height="3.5" fill="#e8f0fa"/><rect x="3.5" y="7" width="1.5" height="2.5" fill="#4f86c6"/></svg>
<div style="position:absolute;left:583.4px;top:89.87px;white-space:pre;font-family:'Liberation Sans',sans-serif;font-size:9.6px;line-height:9.6px;color:#1a1a1a;transform:scaleX(0.8318);transform-origin:0 0;">Save</div>
<div style="position:absolute;left:602.5px;top:94px;width:0;height:0;border-left:2.5px solid transparent;border-right:2.5px solid transparent;border-top:3px solid #222"></div>
<div style="position:absolute;left:612.5px;top:89px;width:1px;height:11px;background:#d3d5d9"></div>
<svg style="position:absolute;left:617px;top:89px" width="16" height="11"><rect x="0.5" y="2" width="10" height="8" fill="#fff" stroke="#8a9099" stroke-width="0.7"/><path d="M0.5 5 L10.5 5 M0.5 7.5 L10.5 7.5 M4 2 L4 10 M7 2 L7 10" stroke="#b0b5bc" stroke-width="0.5"/><path d="M7 3 L11 3 L11 0.8 L15 4 L11 7.2 L11 5 L7 5Z" fill="#3a9f6a"/></svg>
<div style="position:absolute;left:633.4px;top:89.87px;white-space:pre;font-family:'Liberation Sans',sans-serif;font-size:9.6px;line-height:9.6px;color:#1a1a1a;transform:scaleX(0.9244);transform-origin:0 0;">Import Dataset</div>
<div style="position:absolute;left:692.5px;top:94px;width:0;height:0;border-left:2.5px solid transparent;border-right:2.5px solid transparent;border-top:3px solid #222"></div>
<div style="position:absolute;left:702.5px;top:89px;width:1px;height:11px;background:#d3d5d9"></div>
<svg style="position:absolute;left:707.5px;top:89px" width="12" height="12"><path d="M11 1 L6 6" stroke="#9a6a30" stroke-width="1.3"/><path d="M6.5 5 L2 8 L0.5 11.5 L4 10 L7.5 6.5Z" fill="#e8b84a" stroke="#a07020" stroke-width="0.6"/></svg>
<div style="position:absolute;left:721px;top:89.87px;white-space:pre;font-family:'Liberation Sans',sans-serif;font-size:9.6px;line-height:9.6px;color:#1a1a1a;transform:scaleX(0.9120);transform-origin:0 0;">Clear All</div>
<svg style="position:absolute;left:913.5px;top:88.5px" width="13" height="12"><path d="M10.2 7.2 A4.4 4.4 0 1 1 9.2 2.6" fill="none" stroke="#aab6c6" stroke-width="2.2"/><path d="M10.2 7.2 A4.4 4.4 0 1 1 9.2 2.6" fill="none" stroke="#e6edf6" stroke-width="1"/><path d="M6.2 5.2 L11.8 5.2 L11.8 0.6Z" fill="#e6edf6" stroke="#aab6c6" stroke-width="0.8"/></svg>
<div style="position:absolute;left:512px;top:102.5px;width:418px;height:14.5px;background:linear-gradient(#f2f3f5,#eaebed)"></div>
<div style="position:absolute;left:514.8px;top:105.61px;white-space:pre;font-family:'Liberation Sans',sans-serif;font-size:9.2px;line-height:9.2px;font-weight:bold;color:#1a1a1a;transform:scaleX(0.8977);transform-origin:0 0;">Data</div>
<div style="position:absolute;left:512px;top:131.5px;width:418px;height:1px;background:#eeeff0"></div>
<div style="position:absolute;left:617.5px;top:117px;width:1px;height:15px;background:#ececec"></div>
<div style="position:absolute;left:514.6px;top:119.10000000000001px;white-space:pre;font-family:'Liberation Mono',monospace;font-size:9.5px;line-height:12px;color:#1a1a1a;transform:scaleX(0.8982);transform-origin:0 0">dlv</div>
<div style="position:absolute;left:619.3px;top:119.10000000000001px;white-space:pre;font-family:'Liberation Mono',monospace;font-size:9.5px;line-height:12px;color:#1a1a1a;transform:scaleX(0.8982);transform-origin:0 0">88 obs. of 33 variables</div>
<svg style="position:absolute;left:915px;top:119.3px" width="11" height="10"><rect x="0.5" y="0.5" width="10" height="9" rx="1" fill="#fbfcfd" stroke="#b3b8c0" stroke-width="0.8"/><rect x="1" y="1" width="9" height="1.6" fill="#bfe0f3"/><path d="M1 4.6 L10 4.6 M1 6.9 L10 6.9 M3.3 2.6 L3.3 9.5 M6.3 2.6 L6.3 9.5" stroke="#d3d7dd" stroke-width="0.6"/></svg>
<div style="position:absolute;left:512px;top:146.5px;width:418px;height:1px;background:#eeeff0"></div>
<div style="position:absolute;left:617.5px;top:132px;width:1px;height:15px;background:#ececec"></div>
<div style="position:absolute;left:514.6px;top:134.70000000000002px;white-space:pre;font-family:'Liberation Mono',monospace;font-size:9.5px;line-height:12px;color:#1a1a1a;transform:scaleX(0.8982);transform-origin:0 0">dlv.r</div>
<div style="position:absolute;left:619.3px;top:134.70000000000002px;white-space:pre;font-family:'Liberation Mono',monospace;font-size:9.5px;line-height:12px;color:#1a1a1a;transform:scaleX(0.8982);transform-origin:0 0">87 obs. of 33 variables</div>
<svg style="position:absolute;left:915px;top:134.3px" width="11" height="10"><rect x="0.5" y="0.5" width="10" height="9" rx="1" fill="#fbfcfd" stroke="#b3b8c0" stroke-width="0.8"/><rect x="1" y="1" width="9" height="1.6" fill="#bfe0f3"/><path d="M1 4.6 L10 4.6 M1 6.9 L10 6.9 M3.3 2.6 L3.3 9.5 M6.3 2.6 L6.3 9.5" stroke="#d3d7dd" stroke-width="0.6"/></svg>
<div style="position:absolute;left:512px;top:147.5px;width:418px;height:13px;background:linear-gradient(#f2f3f5,#eaebed)"></div>
<div style="position:absolute;left:514.6px;top:149.41px;white-space:pre;font-family:'Liberation Sans',sans-serif;font-size:9.2px;line-height:9.2px;font-weight:bold;color:#1a1a1a;transform:scaleX(0.9158);transform-origin:0 0;">Values</div>
<div style="position:absolute;left:512px;top:175.0px;width:418px;height:1px;background:#eeeff0"></div>
<div style="position:absolute;left:617.5px;top:160.5px;width:1px;height:15px;background:#ececec"></div>
<div style="position:absolute;left:514.6px;top:163.5px;white-space:pre;font-family:'Liberation Mono',monospace;font-size:9.5px;line-height:12px;color:#1a1a1a;transform:scaleX(0.8982);transform-origin:0 0">clay.b.aov</div>
<div style="position:absolute;left:619.3px;top:163.5px;white-space:pre;font-family:'Liberation Mono',monospace;font-size:9.5px;line-height:12px;color:#1a1a1a;transform:scaleX(0.8982);transform-origin:0 0">aov[13]</div>
<div style="position:absolute;left:512px;top:190.0px;width:418px;height:1px;background:#eeeff0"></div>
<div style="position:absolute;left:617.5px;top:175.5px;width:1px;height:15px;background:#ececec"></div>
<div style="position:absolute;left:514.6px;top:178.4px;white-space:pre;font-family:'Liberation Mono',monospace;font-size:9.5px;line-height:12px;color:#1a1a1a;transform:scaleX(0.8982);transform-origin:0 0">r.geo.cols</div>
<div style="position:absolute;left:619.3px;top:178.4px;white-space:pre;font-family:'Liberation Mono',monospace;font-size:9.5px;line-height:12px;color:#1a1a1a;transform:scaleX(0.8982);transform-origin:0 0">character[7]</div>
<div style="position:absolute;left:512px;top:335.6px;width:418px;height:433.4px;background:#fff;border-radius:4px 4px 0 0;box-shadow:0 1px 2px rgba(0,0,0,0.32), 0 0 0 0.5px rgba(0,0,0,0.12)"></div>
<div style="position:absolute;left:512px;top:335.6px;width:418px;height:15.7px;background:linear-gradient(#e9eaed,#e2e3e7);border-radius:4px 4px 0 0;border-bottom:1px solid #cdd0d4;box-sizing:border-box"></div>
<div style="position:absolute;left:512px;top:335.6px;width:33px;height:15.7px;border-right:1px solid #c9ccd1;box-sizing:border-box"></div>
<div style="position:absolute;left:545px;top:335.6px;width:32.5px;height:16.2px;background:linear-gradient(#fbfbfc,#f3f4f6);border-right:1px solid #c9ccd1;box-sizing:border-box"></div>
<div style="position:absolute;left:577.5px;top:335.6px;width:51px;height:15.7px;border-right:1px solid #c9ccd1;box-sizing:border-box"></div>
<div style="position:absolute;left:628.5px;top:335.6px;width:32px;height:15.7px;border-right:1px solid #c9ccd1;box-sizing:border-box"></div>
<div style="position:absolute;left:518.9px;top:338.11px;white-space:pre;font-family:'Liberation Sans',sans-serif;font-size:9.2px;line-height:9.2px;font-weight:bold;color:#1a1a1a;transform:scaleX(0.8872);transform-origin:0 0;">Files</div>
<div style="position:absolute;left:551.6px;top:338.11px;white-space:pre;font-family:'Liberation Sans',sans-serif;font-size:9.2px;line-height:9.2px;font-weight:bold;color:#1a1a1a;transform:scaleX(0.8714);transform-origin:0 0;">Plots</div>
<div style="position:absolute;left:584.5px;top:338.11px;white-space:pre;font-family:'Liberation Sans',sans-serif;font-size:9.2px;line-height:9.2px;font-weight:bold;color:#1a1a1a;transform:scaleX(0.8715);transform-origin:0 0;">Packages</div>
<div style="position:absolute;left:635.3px;top:338.11px;white-space:pre;font-family:'Liberation Sans',sans-serif;font-size:9.2px;line-height:9.2px;font-weight:bold;color:#1a1a1a;transform:scaleX(0.9430);transform-origin:0 0;">Help</div>
<div style="position:absolute;left:901px;top:343px;width:10px;height:4.5px;border:1px solid #9a9da3;border-top-width:1.5px;border-radius:1px;background:#fff;box-sizing:border-box"></div>
<div style="position:absolute;left:914px;top:339px;width:10.5px;height:8.5px;border:1px solid #9a9da3;border-top-width:2px;border-radius:1px;background:#f4f5f7;box-sizing:border-box"></div>
<div style="position:absolute;left:512px;top:351.3px;width:418px;height:17px;background:linear-gradient(#fdfdfd,#eef0f2);border-bottom:1px solid #c6c9ce;box-sizing:border-box"></div>
<svg style="position:absolute;left:517px;top:355.3px" width="33" height="11"><path d="M0.8 5.5 L5.5 1.5 L5.5 3.5 L11 3.5 L11 7.5 L5.5 7.5 L5.5 9.5Z" fill="#a9cbee" stroke="#6e9fd6" stroke-width="0.8"/><path d="M31.5 5.5 L26.8 1.5 L26.8 3.5 L21.3 3.5 L21.3 7.5 L26.8 7.5 L26.8 9.5Z" fill="#e8edf3" stroke="#d5dce5" stroke-width="0.8"/></svg>
<div style="position:absolute;left:555.6px;top:355px;width:1px;height:11px;background:#d3d5d9"></div>
<svg style="position:absolute;left:561px;top:353px" width="13" height="13"><circle cx="7.5" cy="5" r="3.8" fill="#e7f3e9" stroke="#4d5560" stroke-width="1.2"/><path d="M6 5 L9 5 M7.5 3.5 L7.5 6.5" stroke="#2f9a3e" stroke-width="1.1"/><path d="M4.8 7.8 L1.5 11.5" stroke="#b06a20" stroke-width="2" stroke-linecap="round"/></svg>
<div style="position:absolute;left:576.2px;top:355.67px;white-space:pre;font-family:'Liberation Sans',sans-serif;font-size:9.6px;line-height:9.6px;color:#1a1a1a;transform:scaleX(0.9128);transform-origin:0 0;">Zoom</div>
<div style="position:absolute;left:605.4px;top:355px;width:1px;height:11px;background:#d3d5d9"></div>
<svg style="position:absolute;left:612px;top:354px" width="12" height="11"><rect x="0.5" y="0.5" width="10.5" height="9.5" fill="#fff" stroke="#8a9099" stroke-width="0.8"/><rect x="2" y="2" width="7.5" height="6.5" fill="#3d77c7"/><path d="M2 8.5 L5 5 L9.5 8.5Z" fill="#f0c040"/></svg>
<div style="position:absolute;left:624.7px;top:355.67px;white-space:pre;font-family:'Liberation Sans',sans-serif;font-size:9.6px;line-height:9.6px;color:#1a1a1a;transform:scaleX(0.9623);transform-origin:0 0;">Export</div>
<div style="position:absolute;left:652.4px;top:359.5px;width:0;height:0;border-left:2.5px solid transparent;border-right:2.5px solid transparent;border-top:3px solid #222"></div>
<div style="position:absolute;left:662.5px;top:355px;width:1px;height:11px;background:#d3d5d9"></div>
<svg style="position:absolute;left:667.5px;top:353px" width="14" height="13"><rect x="4" y="3" width="9" height="9" fill="#fff" stroke="#9aa0a8" stroke-width="0.7"/><circle cx="4.5" cy="4.5" r="3.8" fill="#d8342c"/><path d="M3 3 L6 6 M6 3 L3 6" stroke="#fff" stroke-width="1.1"/></svg>
<div style="position:absolute;left:686.6px;top:355px;width:1px;height:11px;background:#d3d5d9"></div>
<svg style="position:absolute;left:691px;top:354px" width="12" height="12"><path d="M11 1 L6 6" stroke="#9a6a30" stroke-width="1.3"/><path d="M6.5 5 L2 8 L0.5 11.5 L4 10 L7.5 6.5Z" fill="#e8b84a" stroke="#a07020" stroke-width="0.6"/></svg>
<div style="position:absolute;left:705px;top:355.67px;white-space:pre;font-family:'Liberation Sans',sans-serif;font-size:9.6px;line-height:9.6px;color:#1a1a1a;transform:scaleX(0.9092);transform-origin:0 0;">Clear All</div>
<svg style="position:absolute;left:914px;top:353px" width="13" height="12"><path d="M10.2 7.2 A4.4 4.4 0 1 1 9.2 2.6" fill="none" stroke="#aab6c6" stroke-width="2.2"/><path d="M10.2 7.2 A4.4 4.4 0 1 1 9.2 2.6" fill="none" stroke="#e6edf6" stroke-width="1"/><path d="M6.2 5.2 L11.8 5.2 L11.8 0.6Z" fill="#e6edf6" stroke="#aab6c6" stroke-width="0.8"/></svg>
<svg style="position:absolute;left:0;top:0" width="936" height="887"><line x1="617.60" y1="425.8" x2="617.60" y2="697.6" stroke="#e3e3e3" stroke-width="1"/><line x1="688.73" y1="425.8" x2="688.73" y2="697.6" stroke="#e3e3e3" stroke-width="1"/><line x1="759.87" y1="425.8" x2="759.87" y2="697.6" stroke="#e3e3e3" stroke-width="1"/><line x1="831.00" y1="425.8" x2="831.00" y2="697.6" stroke="#e3e3e3" stroke-width="1"/><line x1="569.8" y1="440.40" x2="900.4" y2="440.40" stroke="#e3e3e3" stroke-width="1"/><line x1="569.8" y1="475.97" x2="900.4" y2="475.97" stroke="#e3e3e3" stroke-width="1"/><line x1="569.8" y1="511.53" x2="900.4" y2="511.53" stroke="#e3e3e3" stroke-width="1"/><line x1="569.8" y1="547.10" x2="900.4" y2="547.10" stroke="#e3e3e3" stroke-width="1"/><line x1="569.8" y1="582.67" x2="900.4" y2="582.67" stroke="#e3e3e3" stroke-width="1"/><line x1="569.8" y1="618.24" x2="900.4" y2="618.24" stroke="#e3e3e3" stroke-width="1"/><line x1="569.8" y1="653.80" x2="900.4" y2="653.80" stroke="#e3e3e3" stroke-width="1"/><line x1="569.8" y1="689.37" x2="900.4" y2="689.37" stroke="#e3e3e3" stroke-width="1"/><rect x="569.8" y="425.8" width="330.60" height="271.80" fill="none" stroke="#5a5a5a" stroke-width="1"/><line x1="569.8" y1="440.4" x2="569.8" y2="689.369" stroke="#222" stroke-width="1"/><line x1="617.6" y1="697.6" x2="831.0020000000001" y2="697.6" stroke="#222" stroke-width="1"/><line x1="562.8" y1="440.40" x2="569.8" y2="440.40" stroke="#666" stroke-width="1"/><line x1="562.8" y1="475.97" x2="569.8" y2="475.97" stroke="#666" stroke-width="1"/><line x1="562.8" y1="511.53" x2="569.8" y2="511.53" stroke="#666" stroke-width="1"/><line x1="562.8" y1="547.10" x2="569.8" y2="547.10" stroke="#666" stroke-width="1"/><line x1="562.8" y1="582.67" x2="569.8" y2="582.67" stroke="#666" stroke-width="1"/><line x1="562.8" y1="618.24" x2="569.8" y2="618.24" stroke="#666" stroke-width="1"/><line x1="562.8" y1="653.80" x2="569.8" y2="653.80" stroke="#666" stroke-width="1"/><line x1="562.8" y1="689.37" x2="569.8" y2="689.37" stroke="#666" stroke-width="1"/><line x1="617.60" y1="697.6" x2="617.60" y2="704.6" stroke="#666" stroke-width="1"/><line x1="688.73" y1="697.6" x2="688.73" y2="704.6" stroke="#666" stroke-width="1"/><line x1="759.87" y1="697.6" x2="759.87" y2="704.6" stroke="#666" stroke-width="1"/><line x1="831.00" y1="697.6" x2="831.00" y2="704.6" stroke="#666" stroke-width="1"/><text x="617.60" y="722.7" font-size="11.5" text-anchor="middle" style="font-family:'Liberation Sans',sans-serif" fill="#111">640000</text><text x="688.73" y="722.7" font-size="11.5" text-anchor="middle" style="font-family:'Liberation Sans',sans-serif" fill="#111">650000</text><text x="759.87" y="722.7" font-size="11.5" text-anchor="middle" style="font-family:'Liberation Sans',sans-serif" fill="#111">660000</text><text x="831.00" y="722.7" font-size="11.5" text-anchor="middle" style="font-family:'Liberation Sans',sans-serif" fill="#111">670000</text><text x="0" y="0" transform="translate(552.9,475.97) rotate(-90)" font-size="11.5" text-anchor="middle" style="font-family:'Liberation Sans',sans-serif" fill="#111">1135000</text><text x="0" y="0" transform="translate(552.9,547.10) rotate(-90)" font-size="11.5" text-anchor="middle" style="font-family:'Liberation Sans',sans-serif" fill="#111">1125000</text><text x="0" y="0" transform="translate(552.9,618.24) rotate(-90)" font-size="11.5" text-anchor="middle" style="font-family:'Liberation Sans',sans-serif" fill="#111">1115000</text><text x="0" y="0" transform="translate(552.9,689.37) rotate(-90)" font-size="11.5" text-anchor="middle" style="font-family:'Liberation Sans',sans-serif" fill="#111">1105000</text><text x="735" y="752" font-size="11.5" text-anchor="middle" style="font-family:'Liberation Sans',sans-serif" fill="#111">UTM E</text><text x="735" y="766.2" font-size="11.74" text-anchor="middle" style="font-family:'Liberation Sans',sans-serif" fill="#111">Subsoil bulk density, by geomorphic region</text><text x="0" y="0" transform="translate(525,561.5) rotate(-90)" font-size="11.5" text-anchor="middle" style="font-family:'Liberation Sans',sans-serif" fill="#111">UTM N</text><text x="734.7" y="403" font-size="14.1" font-weight="bold" text-anchor="middle" style="font-family:'Liberation Sans',sans-serif" fill="#111">Lake Valencia</text><rect x="569.8" y="425.8" width="72.6" height="70.7" fill="#fff" stroke="#5a5a5a" stroke-width="1"/><circle cx="580.3" cy="440.30" r="2.6" fill="#ec4532" stroke="#111" stroke-width="0.7"/><text x="590.8" y="443.90" font-size="11.5" style="font-family:'Liberation Sans',sans-serif" fill="#111">Region 2</text><circle cx="580.3" cy="454.40" r="2.6" fill="#58b22c" stroke="#111" stroke-width="0.7"/><text x="590.8" y="458.00" font-size="11.5" style="font-family:'Liberation Sans',sans-serif" fill="#111">Region 3</text><circle cx="580.3" cy="468.50" r="2.6" fill="#1f4fe8" stroke="#111" stroke-width="0.7"/><text x="590.8" y="472.10" font-size="11.5" style="font-family:'Liberation Sans',sans-serif" fill="#111">Region 6</text><circle cx="580.3" cy="482.60" r="2.6" fill="#dd5fe8" stroke="#111" stroke-width="0.7"/><text x="590.8" y="486.20" font-size="11.5" style="font-family:'Liberation Sans',sans-serif" fill="#111">Region 7</text><circle cx="724.4" cy="526.1" r="2.7" fill="#ec4532" stroke="#111" stroke-width="0.9"/><circle cx="759.8" cy="526.1" r="3.0" fill="#ec4532" stroke="#111" stroke-width="0.9"/><circle cx="774.1" cy="518.8" r="3.0" fill="#ec4532" stroke="#111" stroke-width="0.9"/><circle cx="781.2" cy="518.8" r="2.9" fill="#ec4532" stroke="#111" stroke-width="0.9"/><circle cx="774.1" cy="526.1" r="3.0" fill="#ec4532" stroke="#111" stroke-width="0.9"/><circle cx="767.1" cy="533.3" r="3.1" fill="#ec4532" stroke="#111" stroke-width="0.9"/><circle cx="774.1" cy="533.3" r="3.0" fill="#ec4532" stroke="#111" stroke-width="0.9"/><circle cx="795.3" cy="518.8" r="2.9" fill="#ec4532" stroke="#111" stroke-width="0.9"/><circle cx="809.8" cy="540.2" r="3.0" fill="#ec4532" stroke="#111" stroke-width="0.9"/><circle cx="809.8" cy="547.3" r="3.0" fill="#ec4532" stroke="#111" stroke-width="0.9"/><circle cx="831" cy="519" r="2.3" fill="#ec4532" stroke="#111" stroke-width="0.9"/><circle cx="838.1" cy="519" r="2.8" fill="#ec4532" stroke="#111" stroke-width="0.9"/><circle cx="831" cy="526.3" r="2.8" fill="#ec4532" stroke="#111" stroke-width="0.9"/><circle cx="838.1" cy="526.3" r="2.8" fill="#ec4532" stroke="#111" stroke-width="0.9"/><circle cx="873.6" cy="511.9" r="2.5" fill="#ec4532" stroke="#111" stroke-width="0.9"/><circle cx="888.1" cy="519.1" r="2.4" fill="#ec4532" stroke="#111" stroke-width="0.9"/><circle cx="859.5" cy="540.4" r="2.5" fill="#ec4532" stroke="#111" stroke-width="0.9"/><circle cx="866.8" cy="540.4" r="2.8" fill="#ec4532" stroke="#111" stroke-width="0.9"/><circle cx="866.8" cy="547.5" r="2.6" fill="#ec4532" stroke="#111" stroke-width="0.9"/><circle cx="873.8" cy="547.5" r="2.5" fill="#ec4532" stroke="#111" stroke-width="0.9"/><circle cx="752.8" cy="569" r="3.0" fill="#ec4532" stroke="#111" stroke-width="0.9"/><circle cx="709.9" cy="597.2" r="2.5" fill="#ec4532" stroke="#111" stroke-width="0.9"/><circle cx="717.1" cy="533.1" r="1.9" fill="#dd5fe8" stroke="#111" stroke-width="0.9"/><circle cx="724.4" cy="533.1" r="2.4" fill="#dd5fe8" stroke="#111" stroke-width="0.9"/><circle cx="717.1" cy="540.3" r="2.2" fill="#dd5fe8" stroke="#111" stroke-width="0.9"/><circle cx="724.4" cy="540.3" r="1.8" fill="#dd5fe8" stroke="#111" stroke-width="0.9"/><circle cx="717.1" cy="547.3" r="2.2" fill="#dd5fe8" stroke="#111" stroke-width="0.9"/><circle cx="724.4" cy="547.3" r="1.2" fill="#dd5fe8" stroke="#111" stroke-width="0.9"/><circle cx="724.4" cy="561.7" r="2.0" fill="#dd5fe8" stroke="#111" stroke-width="0.9"/><circle cx="731.3" cy="561.7" r="2.0" fill="#dd5fe8" stroke="#111" stroke-width="0.9"/><circle cx="709.9" cy="569" r="2.0" fill="#dd5fe8" stroke="#111" stroke-width="0.9"/><circle cx="717.1" cy="569" r="2.6" fill="#dd5fe8" stroke="#111" stroke-width="0.9"/><circle cx="724.4" cy="569" r="1.8" fill="#dd5fe8" stroke="#111" stroke-width="0.9"/><circle cx="731.3" cy="569" r="2.2" fill="#dd5fe8" stroke="#111" stroke-width="0.9"/><circle cx="717.1" cy="576.2" r="1.7" fill="#dd5fe8" stroke="#111" stroke-width="0.9"/><circle cx="724.4" cy="576.2" r="2.3" fill="#dd5fe8" stroke="#111" stroke-width="0.9"/><circle cx="731.3" cy="576.2" r="2.5" fill="#dd5fe8" stroke="#111" stroke-width="0.9"/><circle cx="717.1" cy="583" r="2.2" fill="#dd5fe8" stroke="#111" stroke-width="0.9"/><circle cx="724.4" cy="583" r="2.2" fill="#dd5fe8" stroke="#111" stroke-width="0.9"/><circle cx="731.3" cy="583" r="2.1" fill="#dd5fe8" stroke="#111" stroke-width="0.9"/><circle cx="709.9" cy="590.3" r="1.8" fill="#dd5fe8" stroke="#111" stroke-width="0.9"/><circle cx="581.9" cy="576.2" r="1.5" fill="#dd5fe8" stroke="#111" stroke-width="0.9"/><circle cx="759.9" cy="576.2" r="2.8" fill="#58b22c" stroke="#111" stroke-width="0.9"/><circle cx="709.9" cy="583" r="2.5" fill="#58b22c" stroke="#111" stroke-width="0.9"/><circle cx="745.7" cy="583" r="2.6" fill="#58b22c" stroke="#111" stroke-width="0.9"/><circle cx="717.1" cy="590.3" r="2.7" fill="#58b22c" stroke="#111" stroke-width="0.9"/><circle cx="724.4" cy="590.3" r="2.6" fill="#58b22c" stroke="#111" stroke-width="0.9"/><circle cx="774.6" cy="590.3" r="2.4" fill="#58b22c" stroke="#111" stroke-width="0.9"/><circle cx="717.1" cy="597.2" r="3.0" fill="#58b22c" stroke="#111" stroke-width="0.9"/><circle cx="724.4" cy="597.2" r="2.7" fill="#58b22c" stroke="#111" stroke-width="0.9"/><circle cx="731.3" cy="597.2" r="3.1" fill="#58b22c" stroke="#111" stroke-width="0.9"/><circle cx="717.1" cy="604.6" r="3.2" fill="#58b22c" stroke="#111" stroke-width="0.9"/><circle cx="731.3" cy="604.6" r="2.8" fill="#58b22c" stroke="#111" stroke-width="0.9"/><circle cx="809.7" cy="590.3" r="2.6" fill="#58b22c" stroke="#111" stroke-width="0.9"/><circle cx="738.6" cy="569" r="2.8" fill="#1f4fe8" stroke="#111" stroke-width="0.9"/><circle cx="738.6" cy="583" r="2.1" fill="#1f4fe8" stroke="#111" stroke-width="0.9"/><circle cx="738.6" cy="590.3" r="2.5" fill="#1f4fe8" stroke="#111" stroke-width="0.9"/><circle cx="745.7" cy="590.3" r="2.7" fill="#1f4fe8" stroke="#111" stroke-width="0.9"/><circle cx="745.7" cy="597.2" r="2.7" fill="#1f4fe8" stroke="#111" stroke-width="0.9"/><circle cx="798.9" cy="590.3" r="2.2" fill="#1f4fe8" stroke="#111" stroke-width="0.9"/><circle cx="802.6" cy="590.3" r="2.6" fill="#1f4fe8" stroke="#111" stroke-width="0.9"/><circle cx="795.5" cy="597.4" r="2.7" fill="#1f4fe8" stroke="#111" stroke-width="0.9"/><circle cx="809.7" cy="597.4" r="2.4" fill="#1f4fe8" stroke="#111" stroke-width="0.9"/><circle cx="816.8" cy="597.4" r="2.7" fill="#1f4fe8" stroke="#111" stroke-width="0.9"/><circle cx="809.7" cy="604.6" r="2.8" fill="#1f4fe8" stroke="#111" stroke-width="0.9"/><circle cx="802.3" cy="611.6" r="3.2" fill="#1f4fe8" stroke="#111" stroke-width="0.9"/><circle cx="731.0" cy="568.6" r="1.6" fill="#dd5fe8" stroke="#111" stroke-width="0.9"/><circle cx="731.0" cy="575.8" r="2.2" fill="#dd5fe8" stroke="#111" stroke-width="0.9"/><circle cx="730.8" cy="575.6" r="1.4" fill="#dd5fe8" stroke="#111" stroke-width="0.9"/><circle cx="716.7" cy="604.1" r="3.0" fill="#58b22c" stroke="#111" stroke-width="0.9"/><circle cx="730.9" cy="596.8" r="2.9" fill="#58b22c" stroke="#111" stroke-width="0.9"/><circle cx="802.2" cy="589.9" r="2.4" fill="#1f4fe8" stroke="#111" stroke-width="0.9"/><circle cx="809.3" cy="604.2" r="2.6" fill="#1f4fe8" stroke="#111" stroke-width="0.9"/><circle cx="837.7" cy="518.6" r="2.6" fill="#ec4532" stroke="#111" stroke-width="0.9"/><circle cx="809.4" cy="546.9" r="2.8" fill="#ec4532" stroke="#111" stroke-width="0.9"/><circle cx="866.4" cy="540.0" r="2.6" fill="#ec4532" stroke="#111" stroke-width="0.9"/><circle cx="724.0" cy="540.0" r="1.3" fill="#dd5fe8" stroke="#111" stroke-width="0.9"/><circle cx="795.0" cy="597.0" r="2.5" fill="#1f4fe8" stroke="#111" stroke-width="0.9"/></svg>
<div style="position:absolute;left:254px;top:458.3px;width:5px;height:1.6px;background:#a3aab5"></div>
<div style="position:absolute;left:718.5px;top:331px;width:5px;height:1px;background:#aab0b8"></div>
<div style="position:absolute;left:718.5px;top:333.3px;width:5px;height:0.8px;background:#c2c6cc"></div>
<div style="position:absolute;left:507.5px;top:419px;width:1px;height:5px;background:#aab0b8"></div>
<div style="position:absolute;left:0px;top:860px;width:901px;height:1px;background:#000"></div>
<div style="position:absolute;left:163px;top:886px;width:295px;height:1px;background:#000"></div></body></html>
